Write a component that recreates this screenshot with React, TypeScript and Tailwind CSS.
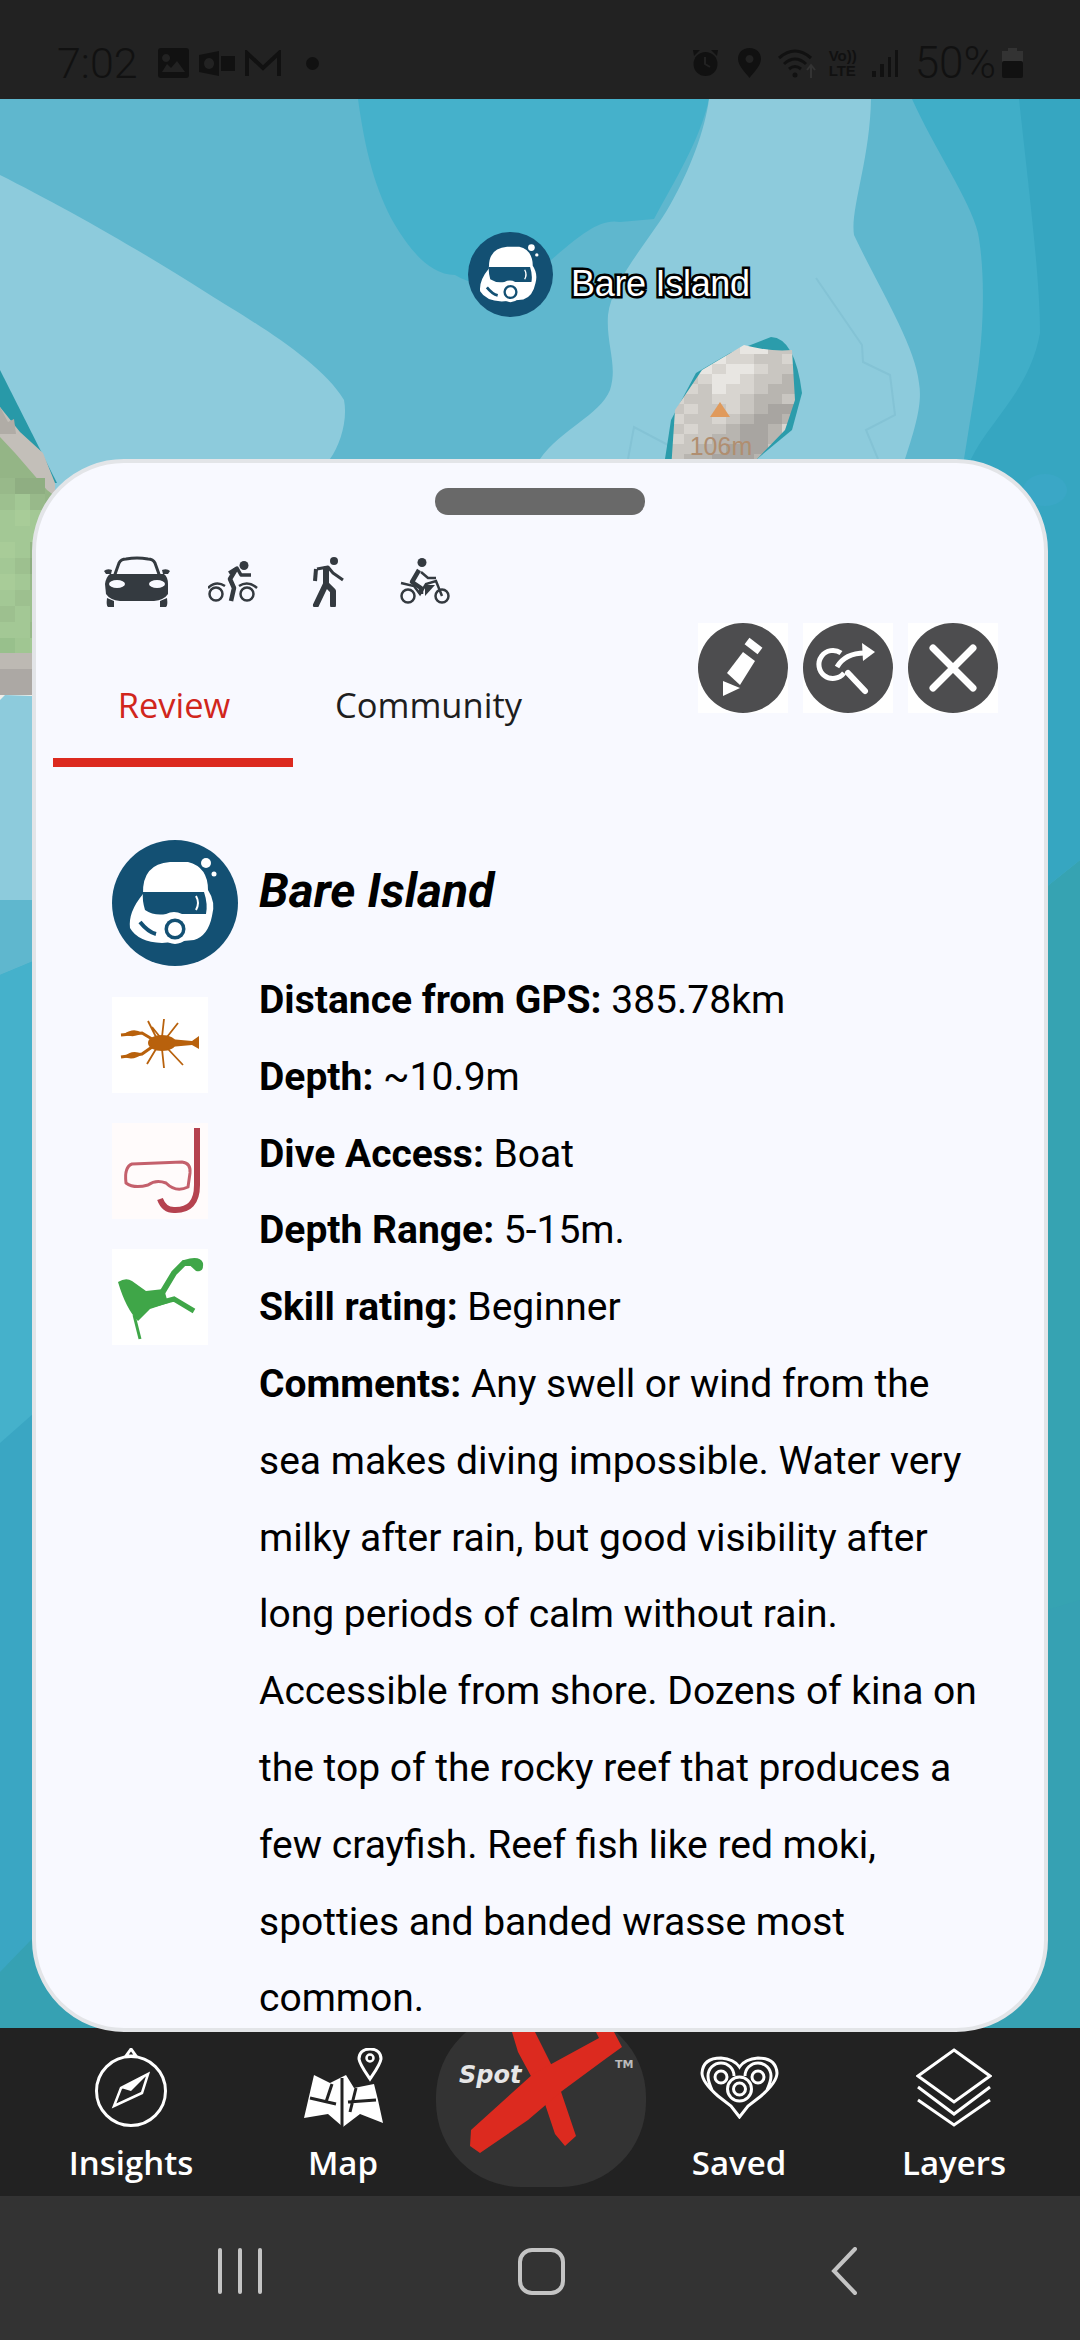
import React, { FC, ReactNode } from 'react';

const ISLAND_ROWS = [
  'eddcdeecc',
  'ddeeddccd',
  'cdedeedcc',
  'ccdeedccb',
  'ddceddcbb',
  'dccddcbbc',
  'cdccdcbaa',
  'dccdcbaab',
  'cdccbaabd',
  'dccbbaabe',
  'ccbbaaacd',
  'cbbaaabde',
];
const ISLAND_COLORS: Record<string, string> = {
  a: '#a8a5a1',
  b: '#b8b5b0',
  c: '#c9c6c1',
  d: '#d8d5d0',
  e: '#e8e6e2',
};
const GREEN_ROWS = [
  ['#98b98a', '#8fae82', '#8fae82'],
  ['#9dc08f', '#a3c895', '#98b98a'],
  ['#a3c895', '#a8cc98', '#a3c895'],
  ['#a3c895', '#a3c895', '#a3c895'],
  ['#a8cc98', '#a3c895', '#94b586'],
  ['#a3c895', '#9dc08f', '#8fae82'],
  ['#a8cc98', '#a3c895', '#98b98a'],
  ['#a3c895', '#9dc08f', '#9dc08f'],
  ['#9dc08f', '#a3c895', '#9dc08f'],
  ['#a3c895', '#a3c895', '#98b98a'],
  ['#98c08c', '#a0c692', '#a3c895'],
];

const MapBackground: FC = () => (
  <svg className="absolute inset-0 h-full w-full" viewBox="0 99 1080 1929" preserveAspectRatio="none">
    <defs>
      <clipPath id="island">
        <path d="M744 345 Q770 352 792 350 L795 400 L785 430 L757 459 L671 470 L675 410 L702 370 Z" />
      </clipPath>
    </defs>
    <rect x="0" y="99" width="1080" height="1929" fill="#5fb7ce" />
    <path d="M358 99 C365 150 375 190 395 225 C410 250 430 275 455 275 C500 300 530 280 551 260 C580 235 600 218 620 222 L654 219 C675 180 700 140 709 99 Z" fill="#45b1cb" />
    <path d="M709 99 C705 130 690 170 670 205 C650 240 612 280 608 315 C606 345 618 365 610 390 C600 415 560 430 540 459 L540 700 L905 700 L905 459 C918 420 922 400 919 383 C915 345 880 290 854 235 C850 210 870 160 871 99 Z" fill="#8dcbdc" />
    <path d="M912 99 C935 150 970 200 978 233 C985 270 985 330 975 390 L964 459 L960 700 L1080 760 L1080 99 Z" fill="#40aec8" />
    <path d="M1019 99 C1030 200 1040 280 1040 333 C1030 390 990 420 971 459 L960 700 L1080 760 L1080 99 Z" fill="#36a6c1" />
    <path d="M0 175 C60 205 140 250 207 293 C250 320 320 360 344 400 C348 420 340 445 330 459 L330 700 L32 870 L0 900 Z" fill="#8dcbdc" />
    <path d="M0 975 L60 950 L1080 700 L1080 1200 L0 1400 Z" fill="#45b1cb" />
    <path d="M0 975 L60 950 L60 1500 L0 1500 Z" fill="#45b1cb" />
    <path d="M0 1443 L60 1390 L1080 1000 L1080 2028 L0 2028 Z" fill="#3aa6c3" />
    <path d="M1030 900 L1080 860 L1080 2028 L1030 2028 Z" fill="#36a3b2" />
    <path d="M0 1972 L60 1910 L1080 1600 L1080 2028 L0 2028 Z" fill="#36a1b3" />
    <path d="M1030 400 L1080 400 L1080 860 L1030 900 Z" fill="#36a6c1" />
    <ellipse cx="1045" cy="490" rx="22" ry="16" fill="#3aa7c6" />
    <path d="M816 278 L862 345 L863 362 L890 375 L895 415 L866 430 L878 459 M628 459 L634 427 L668 445" fill="none" stroke="#84c3d5" strokeWidth="2" />
    {/* west coast */}
    <path d="M0 370 L57 483 L0 483 Z" fill="#2899a8" />
    <path d="M0 407 L20 432 L43 453 L55 483 L60 710 L0 710 Z" fill="#c3bfb9" />
    <path d="M0 407 L8 422 L14 419 L16 434 L0 434 Z" fill="#b0aca6" />
    <path d="M0 437 L15 453 L47 490 L60 500 L60 653 L0 653 Z" fill="#94b586" />
    {GREEN_ROWS.map((row, r) =>
      row.map((color, c) => (
        <rect key={`${r}-${c}`} x={c * 15} y={478 + r * 16} width="15" height="16" fill={color} />
      )),
    )}
    <rect x="0" y="653" width="60" height="16" fill="#bdb9b3" />
    <rect x="0" y="669" width="60" height="26" fill="#aca8a4" />
    <rect x="0" y="695" width="60" height="5" fill="#efeee9" />
    <path d="M0 700 L5 695 L60 697 L60 900 L0 900 Z" fill="#8dcbdc" />
    {/* island */}
    <path d="M771 337 Q795 338 802 393 L792 430 L757 459 L665 459 L671 420 L696 373 L730 353 Z" fill="#2b9cab" />
    <g clipPath="url(#island)">
      {ISLAND_ROWS.map((row, r) =>
        row.split('').map((key, c) => (
          <rect
            key={`${r}-${c}`}
            x={670 + c * 14}
            y={344 + r * 10}
            width="14"
            height="10"
            fill={ISLAND_COLORS[key]}
          />
        )),
      )}
    </g>
    <path d="M720 402 L730 417 L710 417 Z" fill="#e09a5c" />
    <text x="721" y="455" textAnchor="middle" fontFamily="Liberation Sans" fontSize="25" fill="#b08e70">
      106m
    </text>
  </svg>
);

const DiveIcon: FC<{ className?: string }> = ({ className }) => (
  <svg className={className} viewBox="0 0 126 126">
    <circle cx="63" cy="63" r="63" fill="#135073" />
    <path
      d="M31 54 Q30 24 58 22 L76 22 Q96 27 96 50 Q104 62 100 76 Q96 96 82 100 L50 103 Q26 102 18 88 Q16 72 31 54 Z"
      fill="#fff"
    />
    <path d="M31 52 L92 52 Q96 64 94 74 L70 74 Q62 70 54 74 Q42 76 33 70 Q30 60 31 52 Z" fill="#135073" />
    <path d="M84 56 Q88 63 84 70" fill="none" stroke="#fff" strokeWidth="2" />
    <path d="M28 82 Q36 92 44 94" fill="none" stroke="#135073" strokeWidth="4" />
    <circle cx="63" cy="89" r="15" fill="#fff" />
    <circle cx="63" cy="89" r="10.5" fill="#135073" />
    <circle cx="63" cy="89" r="7" fill="#fff" />
    <circle cx="94" cy="23" r="5" fill="#fff" />
    <circle cx="102" cy="34" r="2.5" fill="#fff" />
  </svg>
);

const CarIcon: FC = () => (
  <svg className="mr-[38px] h-[51px] w-[66px]" viewBox="0 0 66 51" fill="#343a40">
    <path d="M10 21 L15 7 Q17 3 22 3 Q33 1 44 3 Q49 3 51 7 L56 21" fill="none" stroke="#343a40" strokeWidth="3" />
    <path d="M0 15 Q3 12 8 14 L7 18 L2 18 Z M66 15 Q63 12 58 14 L59 18 L64 18 Z" />
    <path d="M6 18 L60 18 Q64 21 64 28 L64 38 Q60 44 50 45 L16 45 Q6 44 2 38 L1 28 Q2 21 6 18 Z" />
    <path d="M3 42 L10 45 L10 51 L4 51 Q2 50 3 42 Z M63 42 L56 45 L56 51 L62 51 Q64 50 63 42 Z" />
    <ellipse cx="13" cy="28" rx="8" ry="4" fill="#f8f9ff" />
    <ellipse cx="53" cy="28" rx="8" ry="4" fill="#f8f9ff" />
  </svg>
);

const BikeIcon: FC = () => (
  <svg className="mr-[54px] h-[42px] w-[50px]" viewBox="0 0 50 42" fill="#343a40" stroke="#343a40">
    <circle cx="36" cy="4.5" r="4.5" stroke="none" />
    <circle cx="8" cy="33" r="6.5" fill="none" strokeWidth="2.5" />
    <circle cx="39" cy="33" r="6.5" fill="none" strokeWidth="2.5" />
    <path d="M0 27 Q8 19 17 25 M31 25 Q40 19 49 27" fill="none" strokeWidth="2.5" />
    <path d="M21 12 L29 7 L33 14 L43 14" fill="none" strokeWidth="3.5" strokeLinejoin="round" />
    <path d="M28 8 L22 18 L26 27 L23 40" fill="none" strokeWidth="4.5" strokeLinejoin="round" />
  </svg>
);

const WalkIcon: FC = () => (
  <svg className="mr-[55px] h-[50px] w-[33px]" viewBox="0 0 33 50" fill="#343a40" stroke="#343a40">
    <circle cx="22" cy="4" r="4" stroke="none" />
    <path d="M5 12 L16 10 L21 16 L31 23" fill="none" strokeWidth="3" strokeLinejoin="round" />
    <path d="M4 12 L3 24" fill="none" strokeWidth="4" />
    <path d="M14 12 L14 27 L4 48 M14 27 L21 34 L21 48" fill="none" strokeWidth="6" strokeLinejoin="round" strokeLinecap="round" />
  </svg>
);

const MotoIcon: FC = () => (
  <svg className="h-[47px] w-[50px]" viewBox="0 0 50 47" fill="#343a40" stroke="#343a40">
    <circle cx="22" cy="4.5" r="4.5" stroke="none" />
    <circle cx="8" cy="38" r="6.5" fill="none" strokeWidth="2.5" />
    <circle cx="42" cy="38" r="6.5" fill="none" strokeWidth="2.5" />
    <path d="M19 12 L12 24 L21 30 L21 36" fill="none" strokeWidth="4.5" strokeLinejoin="round" />
    <path d="M21 14 L28 20 L36 20" fill="none" strokeWidth="2.5" />
    <path d="M1 25 L14 28 L20 36 L26 26 L36 23 L42 38" fill="none" strokeWidth="2.5" />
    <path d="M25 27 L25 38 L35 27 Z" stroke="none" />
  </svg>
);

const RoundButton: FC<{ children: ReactNode }> = ({ children }) => (
  <div className="h-[90px] w-[90px] bg-white">
    <svg className="h-full w-full" viewBox="0 0 90 90" fill="none" stroke="#fff">
      <circle cx="45" cy="45" r="45" fill="#4d4d4f" stroke="none" />
      {children}
    </svg>
  </div>
);

const Crayfish: FC = () => (
  <svg className="h-[96px] w-[96px] bg-white" viewBox="0 0 96 96" fill="#b8610c" stroke="#b8610c">
    <ellipse cx="50" cy="46" rx="14" ry="8" stroke="none" />
    <path d="M58 42 L80 44 L87 39 L87 52 L80 48 L58 50 Z" stroke="none" />
    <path d="M40 42 L30 36 L9 38 M40 50 L30 57 L9 60" fill="none" strokeWidth="3" />
    <path d="M30 36 Q22 30 12 37 Q22 42 30 36 Z M30 57 Q22 64 12 60 Q20 52 30 57 Z" stroke="none" />
    <path d="M44 40 L36 24 M50 40 L52 22 M55 40 L66 26 M44 52 L35 67 M50 52 L52 71 M56 52 L71 68 M48 40 L40 30" fill="none" strokeWidth="1.8" />
  </svg>
);

const Snorkel: FC = () => (
  <svg className="h-[96px] w-[96px] bg-[#fffbfb]" viewBox="0 0 96 96" fill="none">
    <path d="M85 5 L85 62 Q85 88 62 87 Q52 87 48 76" stroke="#b5424f" strokeWidth="6" />
    <path
      d="M20 41 L70 39 Q79 40 78 50 L76 64 Q64 70 54 60 Q44 56 36 62 Q22 66 14 60 Q12 44 20 41 Z"
      stroke="#c4606c"
      strokeWidth="3"
    />
  </svg>
);

const Diver: FC = () => (
  <svg className="h-[96px] w-[96px] bg-white" viewBox="0 0 96 96" fill="#3fa648" stroke="#3fa648">
    <path d="M6 33 Q14 28 20 32 L34 42 L52 40 L56 54 L38 60 L26 72 Q14 60 6 33 Z" stroke="none" />
    <path d="M50 44 L62 24 L72 14 L88 14" fill="none" strokeWidth="6" />
    <path d="M72 11 Q88 6 91 14 Q92 24 84 22 Z" stroke="none" />
    <path d="M40 56 L62 50 L82 62" fill="none" strokeWidth="5" />
    <path d="M22 66 L28 90" fill="none" strokeWidth="3" />
  </svg>
);

const TabItem: FC<{ label: string; className?: string; children: ReactNode }> = ({ label, className, children }) => (
  <div className={`flex w-[212px] flex-col items-center pt-[20px] ${className ?? ''}`}>
    <div className="flex h-[79px] items-center justify-center">{children}</div>
    <span className="mt-[14px] font-['Open_Sans'] text-[33px] leading-[44px] font-semibold text-white">{label}</span>
  </div>
);

const StatusIcons: FC = () => (
  <div className="flex h-[99px] items-center bg-[#222] pt-[27px] pr-[57px] pl-[57px] text-[#111]">
    <span className="font-[Roboto] text-[43px] leading-none font-light">7:02</span>
    <svg className="ml-[20px] h-[30px] w-[31px]" viewBox="0 0 31 30" fill="#111">
      <path fillRule="evenodd" d="M3 0 H28 Q31 0 31 3 V27 Q31 30 28 30 H3 Q0 30 0 27 V3 Q0 0 3 0 Z M4 24 H27 L19 13 L13 20 L9 16 Z M8 6 a4 4 0 1 0 .1 0 Z" />
    </svg>
    <svg className="ml-[10px] h-[25px] w-[36px]" viewBox="0 0 36 25" fill="#111">
      <path fillRule="evenodd" d="M0 4 L20 0 V25 L0 21 Z M10 7 a5 5.5 0 1 0 .1 0 Z M22 5 H36 V20 H22 Z" />
    </svg>
    <svg className="ml-[9px] h-[26px] w-[38px]" viewBox="0 0 38 26" fill="none" stroke="#111" strokeWidth="4">
      <path d="M3 26 V3 L19 18 L35 3 V26" />
    </svg>
    <span className="ml-[24px] h-[13px] w-[13px] rounded-full bg-[#111]" />
    <svg className="ml-auto h-[28px] w-[27px]" viewBox="0 0 27 28" fill="#111">
      <circle cx="13.5" cy="15" r="12" />
      <path d="M2 7 L8 1 L1 1 Z M25 7 L19 1 L26 1 Z" />
      <path d="M13 8 V15 L18 18" fill="none" stroke="#222" strokeWidth="2" />
    </svg>
    <svg className="ml-[19px] h-[30px] w-[23px]" viewBox="0 0 23 30" fill="#111">
      <path fillRule="evenodd" d="M11.5 0 C19 0 23 5 23 11 C23 18 15 25 11.5 30 C8 25 0 18 0 11 C0 5 4 0 11.5 0 Z M11.5 7 a4 4 0 1 0 .1 0 Z" />
    </svg>
    <svg className="ml-[17px] h-[31px] w-[41px]" viewBox="0 0 41 31" fill="none" stroke="#111" strokeWidth="3">
      <path d="M1 10 Q17 -4 33 10 M6 16 Q17 6 28 16 M11 21 Q17 16 23 21" />
      <circle cx="17" cy="27" r="2.5" fill="#111" stroke="none" />
      <path d="M33 30 V18 M37 22 L33 17 L29 22" stroke="#333" strokeWidth="2" />
    </svg>
    <div className="ml-[10px] flex w-[32px] flex-col font-['Liberation_Sans'] text-[15px] leading-[15px] font-bold">
      <span>Vo))</span>
      <span>LTE</span>
    </div>
    <svg className="ml-[11px] h-[27px] w-[26px]" viewBox="0 0 26 27" fill="#111">
      <rect x="0" y="21" width="4" height="6" />
      <rect x="8" y="14" width="4" height="13" />
      <rect x="16" y="7" width="3" height="20" />
      <rect x="23" y="0" width="3" height="27" />
    </svg>
    <span className="ml-[17px] font-[Roboto] text-[44px] leading-none font-light">50%</span>
    <svg className="ml-[6px] h-[30px] w-[21px]" viewBox="0 0 21 30" fill="#111">
      <rect x="6" y="0" width="9" height="3" fill="#333" />
      <rect x="0" y="3" width="21" height="12" fill="#333" />
      <rect x="0" y="13" width="21" height="17" rx="2" />
    </svg>
  </div>
);

export default function App() {
  return (
    <div className="flex h-[2340px] w-[1080px] flex-col overflow-hidden bg-[#333] font-[Roboto]">
      <StatusIcons />

      <div className="relative h-[1929px] shrink-0">
        <MapBackground />
        <div className="absolute top-[133px] left-[468px] flex">
          <DiveIcon className="h-[85px] w-[85px]" />
          <span className="mt-[32px] ml-[18px] font-['Liberation_Sans'] text-[36px] leading-[40px] tracking-[-0.3px] whitespace-nowrap text-white [-webkit-text-stroke:5px_black] [paint-order:stroke_fill]">
            Bare Island
          </span>
        </div>

        <section className="relative z-10 mx-[32px] mt-[360px] inline-block h-[1573px] w-[1016px] overflow-hidden rounded-[92px] border-[4px] border-[#e3e5e8] bg-[#f8f9ff]">
          <div className="mx-auto mt-[25px] h-[27px] w-[210px] rounded-[13px] bg-[#696969]" />

          <div className="mt-[41px] flex h-[51px] items-center pl-[68px]">
            <CarIcon />
            <BikeIcon />
            <WalkIcon />
            <MotoIcon />
          </div>

          <div className="mt-[16px] flex pl-[17px]">
            <div className="h-[144px] w-[240px] border-b-[9px] border-[#dc2a1f] pt-[62px] pl-[2px] text-center font-['Open_Sans'] text-[34.5px] leading-[40px] font-medium text-[#d1261c]">
              Review
            </div>
            <div className="ml-[42px] pt-[62px] font-['Open_Sans'] text-[34.5px] leading-[40px] font-medium text-[#1e1e1e]">
              Community
            </div>
            <div className="mr-[46px] ml-auto flex gap-[15px] self-start">
              <RoundButton>
                <path d="M49 18 L62 28" strokeWidth="8" />
                <path d="M45 29 L57 38 L42 62 L29 50 Z" fill="#fff" stroke="none" />
                <path d="M25 58 L42 65 L25 73 Z" fill="#fff" stroke="none" />
              </RoundButton>
              <RoundButton>
                <path d="M38 30 A14 14 0 1 0 41 50" strokeWidth="5" />
                <path d="M45 50 L62 68" strokeWidth="6" strokeLinecap="round" />
                <path d="M34 44 Q42 30 62 30" strokeWidth="5" />
                <path d="M59 20 L72 29 L60 38 Z" fill="#fff" stroke="none" />
              </RoundButton>
              <RoundButton>
                <path d="M25 25 L65 65 M65 25 L25 65" strokeWidth="7" strokeLinecap="round" />
              </RoundButton>
            </div>
          </div>

          <div className="mt-[73px] flex pl-[76px]">
            <div className="flex w-[147px] shrink-0 flex-col">
              <DiveIcon className="h-[126px] w-[126px]" />
              <div className="mt-[31px] flex flex-col gap-[30px]">
                <Crayfish />
                <Snorkel />
                <Diver />
              </div>
            </div>
            <div className="w-[725px] text-[39px] leading-[76.8px] text-black">
              <h2 className="mb-[20px] flex h-[102px] items-center text-[48px] font-bold italic">Bare Island</h2>
              <p><b className="font-bold">Distance from GPS:</b> 385.78km</p>
              <p><b className="font-bold">Depth:</b> ~10.9m</p>
              <p><b className="font-bold">Dive Access:</b> Boat</p>
              <p><b className="font-bold">Depth Range:</b> 5-15m.</p>
              <p><b className="font-bold">Skill rating:</b> Beginner</p>
              <p>
                <b className="font-bold">Comments:</b> Any swell or wind from the sea makes diving impossible. Water very
                milky after rain, but good visibility after long periods of calm without rain. Accessible from shore.
                Dozens of kina on the top of the rocky reef that produces a few crayfish. Reef fish like red moki,
                spotties and banded wrasse most common.
              </p>
            </div>
          </div>
        </section>
      </div>

      <nav className="flex h-[168px] shrink-0 bg-[#222] pr-[20px] pl-[25px]">
        <TabItem label="Insights">
          <svg className="h-[79px] w-[74px]" viewBox="0 0 74 79" fill="none" stroke="#fff" strokeWidth="3">
            <circle cx="37" cy="43" r="34.5" />
            <path d="M37 1 L32 8 L42 8 Z" />
            <path d="M54 26 L48 45 L20 58 L27 40 Z" strokeWidth="2.5" />
            <path d="M54 26 L27 40 L37 43 Z" fill="#fff" stroke="none" />
          </svg>
        </TabItem>
        <TabItem label="Map">
          <svg className="h-[79px] w-[79px]" viewBox="0 0 79 79">
            <path d="M10 27 L26 35 L42 27 L50 40 L70 36 L74 52 L79 75 L56 66 L39 79 L24 66 L0 70 Z" fill="#fff" />
            <path d="M38 30 L38 79 M6 50 L32 56 M28 36 L22 54 M44 54 L72 52 M52 40 L46 64" fill="none" stroke="#222" strokeWidth="3" />
            <path d="M66 1 C58 1 55 6 55 11 C56 17 62 25 66 31 C70 25 76 17 77 11 C77 6 74 1 66 1 Z" fill="#222" stroke="#fff" strokeWidth="3" />
            <circle cx="66" cy="10" r="3.5" fill="none" stroke="#fff" strokeWidth="2.5" />
          </svg>
        </TabItem>

        <div className="flex w-[184px] justify-center">
          <div className="-mt-[16px] h-[175px] w-[210px] shrink-0 rounded-[85px] bg-[#333]">
            <svg className="h-full w-full" viewBox="0 0 210 175">
              <path d="M76 20 L99 20 L117 56 L140 124 L129 134 L119 122 L107 86 L96 66 L82 40 Z" fill="#dc2a1f" />
              <path d="M160 20 L178 20 L186 35 L168 48 L126 79 L92 108 L44 141 L34 134 L35 118 L97 62 L163 26 Z" fill="#dc2a1f" />
              <text x="23" y="71" fontFamily="DejaVu Sans" fontSize="24" fontWeight="700" fontStyle="italic" fill="#e6e6e6">
                Spot
              </text>
              <text x="179" y="56" fontFamily="DejaVu Sans" fontSize="11" fontWeight="700" fill="#bbb">
                TM
              </text>
            </svg>
          </div>
        </div>

        <TabItem label="Saved">
          <svg className="h-[63px] w-[79px]" viewBox="0 0 79 63" fill="none" stroke="#fff" strokeWidth="3">
            <path d="M39.5 61 L31 50 L18 40 Q2 26 2 17 Q3 2 21 2 Q34 3 39.5 11 Q45 3 58 2 Q76 2 77 17 Q77 26 61 40 L48 50 Z" />
            <path d="M12 34 Q8 25 8 20 A13 13 0 0 1 34 20 M45 20 A13 13 0 0 1 71 20 Q71 25 67 34" />
            <circle cx="21" cy="21" r="6" />
            <circle cx="58" cy="21" r="6" />
            <circle cx="39.5" cy="33" r="12" />
            <circle cx="39.5" cy="33" r="6" />
          </svg>
        </TabItem>
        <TabItem label="Layers" className="ml-[3px]">
          <svg className="h-[79px] w-[76px]" viewBox="0 0 76 79" fill="none" stroke="#fff" strokeWidth="3">
            <path d="M38 2 L74 28 L38 54 L2 28 Z" />
            <path d="M2 39 L38 66 L74 39" />
            <path d="M2 52 L38 77 L74 52" />
          </svg>
        </TabItem>
      </nav>

      <div className="flex h-[144px] shrink-0 items-center bg-[#333] pt-[6px]">
        <div className="ml-[218px] flex gap-[16px]">
          <span className="h-[46px] w-[4px] rounded-full bg-[#c4c4c4]" />
          <span className="h-[46px] w-[4px] rounded-full bg-[#c4c4c4]" />
          <span className="h-[46px] w-[4px] rounded-full bg-[#c4c4c4]" />
        </div>
        <div className="ml-[256px] h-[47px] w-[47px] rounded-[14px] border-[4px] border-[#c4c4c4]" />
        <svg className="ml-[266px] h-[48px] w-[26px]" viewBox="0 0 26 48" fill="none" stroke="#c4c4c4" strokeWidth="4" strokeLinecap="round">
          <path d="M24 2 L3 24 L24 46" />
        </svg>
      </div>
    </div>
  );
}
